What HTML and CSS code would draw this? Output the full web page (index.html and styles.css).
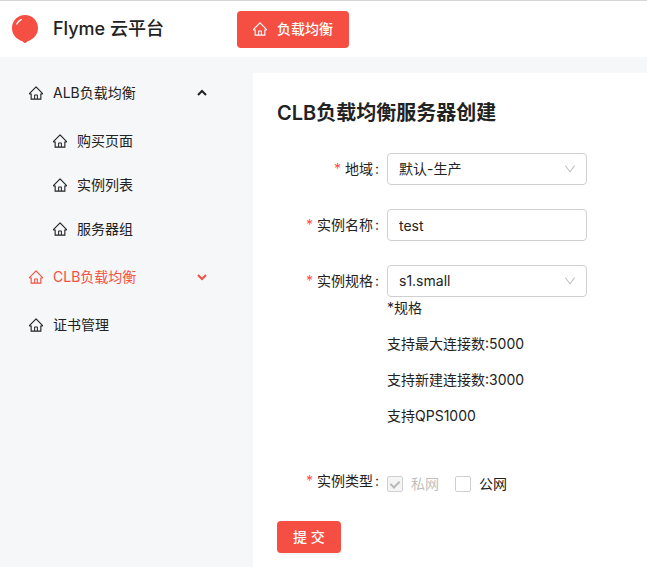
FILE: index.html
```html
<!DOCTYPE html>
<html lang="zh-CN">
<head>
    <meta charset="UTF-8">
    <meta name="viewport" content="width=device-width, initial-scale=1.0">
    <title>Flyme 云平台</title>
    <link rel="stylesheet" href="styles.css">
</head>
<body>
    <svg class="sprite" aria-hidden="true">
        <symbol id="home" viewBox="64 64 896 896">
            <path d="M946.5 505L560.1 118.8l-25.9-25.9a31.5 31.5 0 0 0-44.4 0L77.5 505a63.9 63.9 0 0 0-18.8 46c.4 35.2 29.7 63.3 64.9 63.3h42.5V940h691.8V614.3h43.4c17.1 0 33.2-6.7 45.3-18.8a63.6 63.6 0 0 0 18.7-45.3c0-17-6.7-33.1-18.8-45.2zM568 868H456V664h112v204zm217.9-325.7V868H632V640c0-22.1-17.9-40-40-40H432c-22.1 0-40 17.9-40 40v228H238.1V542.3h-96l370-369.7 23.1 23.1L882 542.3h-96.1z"/>
        </symbol>
        <symbol id="down" viewBox="64 64 896 896">
            <path d="M884 256h-75c-5.1 0-9.9 2.5-12.9 6.6L512 654.2 227.9 262.6c-3-4.1-7.8-6.6-12.9-6.6h-75c-6.5 0-10.3 7.4-6.5 12.7l352.6 486.1c12.8 17.6 39 17.6 51.7 0l352.6-486.1c3.9-5.3.1-12.7-6.4-12.7z"/>
        </symbol>
        <symbol id="arrow" viewBox="0 0 10 10">
            <path d="M1 3l4 4 4-4" fill="none" stroke="currentColor" stroke-width="2"/>
        </symbol>
    </svg>

    <header class="header">
        <div class="brand">
            <svg class="logo" viewBox="0 0 26 28" aria-hidden="true">
                <path d="M13 0C5.600 0 0 5.700 0 13c0 5.500 3.300 9.800 7.500 12 2 1 3.700 1.700 4.700 2.700q.8.600 1.600 0c1-1 2.700-1.700 4.700-2.700C22.700 22.800 26 18.500 26 13 26 5.700 20.400 0 13 0z" fill="#f44f42"/>
                <path d="M4.800 9Q6.200 6 9.200 4.600" fill="none" stroke="#fff" stroke-width="1.400" stroke-linecap="round"/>
            </svg>
            <span class="brand-name">Flyme 云平台</span>
        </div>
        <nav>
            <a class="nav-item" href="#"><svg class="icon"><use href="#home"/></svg>负载均衡</a>
        </nav>
    </header>

    <div class="layout">
        <nav class="sidebar">
            <ul class="menu">
                <li>
                    <a class="menu-item" href="#"><svg class="icon"><use href="#home"/></svg>ALB负载均衡<svg class="arrow open"><use href="#arrow"/></svg></a>
                    <ul class="submenu">
                        <li><a class="menu-item" href="#"><svg class="icon"><use href="#home"/></svg>购买页面</a></li>
                        <li><a class="menu-item" href="#"><svg class="icon"><use href="#home"/></svg>实例列表</a></li>
                        <li><a class="menu-item" href="#"><svg class="icon"><use href="#home"/></svg>服务器组</a></li>
                    </ul>
                </li>
                <li><a class="menu-item active" href="#"><svg class="icon"><use href="#home"/></svg>CLB负载均衡<svg class="arrow"><use href="#arrow"/></svg></a></li>
                <li><a class="menu-item" href="#"><svg class="icon"><use href="#home"/></svg>证书管理</a></li>
            </ul>
        </nav>

        <main class="content">
            <h1>CLB负载均衡服务器创建</h1>
            <form>
                <div class="form-row">
                    <label class="form-label" for="region">地域</label>
                    <div class="control">
                        <div class="select">
                            <select id="region"><option>默认-生产</option></select>
                            <svg class="select-arrow"><use href="#down"/></svg>
                        </div>
                    </div>
                </div>
                <div class="form-row">
                    <label class="form-label" for="name">实例名称</label>
                    <div class="control">
                        <input type="text" id="name" value="test">
                    </div>
                </div>
                <div class="form-row">
                    <label class="form-label" for="spec">实例规格</label>
                    <div class="control">
                        <div class="select">
                            <select id="spec"><option>s1.small</option></select>
                            <svg class="select-arrow"><use href="#down"/></svg>
                        </div>
                        <p>*规格</p>
                        <p>支持最大连接数:5000</p>
                        <p>支持新建连接数:3000</p>
                        <p>支持QPS1000</p>
                    </div>
                </div>
                <div class="form-row" role="group" aria-labelledby="type">
                    <span class="form-label" id="type">实例类型</span>
                    <div class="checks">
                        <label class="check disabled"><input type="checkbox" checked disabled>私网</label>
                        <label class="check"><input type="checkbox">公网</label>
                    </div>
                </div>
                <button type="submit">提 交</button>
            </form>
        </main>
    </div>
</body>
</html>
```
FILE: styles.css
```css
* {
    box-sizing: border-box;
}
body {
    margin: 0;
    min-height: 100vh;
    display: flex;
    flex-direction: column;
    background-color: #f5f7f9;
    color: #222;
    font-family: Inter, "Noto Sans CJK SC", sans-serif;
    font-size: 14px;
    line-height: 22px;
}
a {
    color: inherit;
    text-decoration: none;
}
.sprite {
    display: none;
}
.icon {
    width: 14px;
    height: 14px;
    fill: currentColor;
}
.header {
    display: flex;
    align-items: center;
    height: 57px;
    padding-left: 12px;
    border-top: 1px solid #d5d5d5;
    background-color: #fff;
}
.brand {
    display: flex;
    align-items: center;
    gap: 15px;
    width: 225px;
}
.logo {
    width: 26px;
    height: 28px;
}
.brand-name {
    font-size: 18px;
    font-weight: 500;
}
.nav-item {
    display: flex;
    align-items: center;
    gap: 10px;
    height: 37px;
    padding: 0 16px;
    border-radius: 4px;
    background-color: #f44f42;
    color: #fff;
    font-weight: 500;
}
.layout {
    display: flex;
    flex: 1;
    padding-top: 16px;
}
.sidebar {
    flex: 0 0 253px;
}
.menu,
.submenu {
    display: flex;
    flex-direction: column;
    margin: 0;
    padding: 0;
    list-style: none;
}
.menu {
    gap: 8px;
}
.submenu {
    gap: 4px;
    margin-top: 8px;
    padding-left: 24px;
}
.menu-item {
    display: flex;
    align-items: center;
    gap: 10px;
    height: 40px;
    padding: 0 46px 0 29px;
}
.menu-item.active {
    color: #f44f42;
}
.arrow {
    width: 10px;
    height: 10px;
    margin-left: auto;
}
.arrow.open {
    transform: rotate(180deg);
}
.content {
    flex: 1;
    min-width: 0;
    padding: 24px;
    background-color: #fff;
}
h1 {
    margin: 0 0 24px;
    font-size: 20px;
    font-weight: 600;
    line-height: 32px;
}
.form-row {
    display: flex;
    margin-bottom: 24px;
}
.form-label {
    width: 110px;
    padding-right: 8px;
    line-height: 32px;
    text-align: right;
}
.form-label::before {
    content: "*";
    margin-right: 4px;
    color: #ff4d4f;
}
.form-label::after {
    content: ":";
    margin-left: 2px;
}
.control {
    width: 200px;
}
.control p {
    margin: 0 0 14px;
}
.select {
    position: relative;
}
select,
input[type="text"] {
    display: block;
    width: 100%;
    height: 32px;
    padding: 0 11px;
    border: 1px solid #d0d0d0;
    border-radius: 4px;
    background-color: #fff;
    color: inherit;
    font: inherit;
    appearance: none;
}
.select-arrow {
    position: absolute;
    top: 10px;
    right: 11px;
    width: 12px;
    height: 12px;
    fill: #bfbfbf;
    pointer-events: none;
}
.checks {
    display: flex;
    gap: 16px;
    padding-top: 8px;
}
.check {
    display: flex;
    align-items: center;
    gap: 8px;
    height: 22px;
}
.check.disabled {
    color: #bfbfbf;
}
input[type="checkbox"] {
    display: grid;
    place-items: center;
    width: 16px;
    height: 16px;
    margin: 0;
    border: 1px solid #d0d0d0;
    border-radius: 2px;
    background-color: #fff;
    appearance: none;
}
input[type="checkbox"]:disabled {
    background-color: #f5f5f5;
}
input[type="checkbox"]:checked::before {
    content: "";
    box-sizing: border-box;
    width: 6px;
    height: 9px;
    border: solid #b8b8b8;
    border-width: 0 2px 2px 0;
    transform: translateY(-1px) rotate(45deg);
}
button {
    height: 32px;
    padding: 0 16px;
    border: none;
    border-radius: 4px;
    background-color: #f44f42;
    box-shadow: 0 2px 0 rgba(0, 0, 0, 0.04);
    color: #fff;
    font: inherit;
    font-weight: 500;
    cursor: pointer;
}
```
